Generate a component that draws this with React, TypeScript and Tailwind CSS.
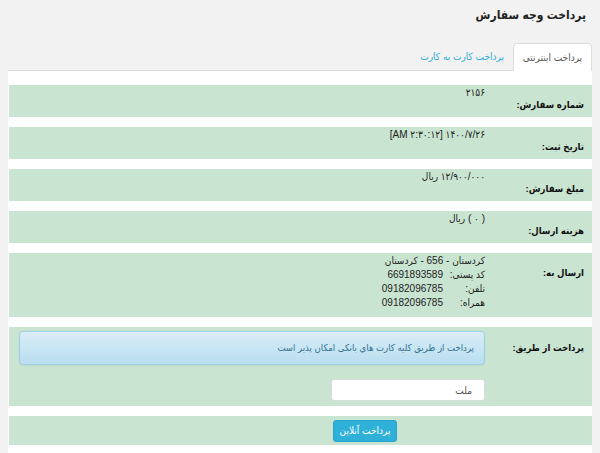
import React from "react";

const font = "font-['Liberation_Sans','DejaVu_Sans_Condensed','DejaVu_Sans',sans-serif]";

function Row({ label, h, children }: { label?: string; h: string; children: React.ReactNode }) {
  return (
    <div className={`flex bg-[#c9e4d1] ${h}`}>
      <div className="w-[107px] shrink-0 pr-[8px] pt-[13px] text-[9.5px] leading-[14px] font-bold text-[#111]">
        {label}
      </div>
      <div className="flex-1 min-w-0 pt-[1px] text-[10px] leading-[14px] text-[#222]">{children}</div>
    </div>
  );
}

export default function App() {
  return (
    <div dir="rtl" className={`w-[600px] h-[453px] overflow-hidden bg-[#f2f2f2] ${font}`}>
      <div className="h-[30px] flex items-center pr-[14px] text-[12px] font-bold text-[#222]">
        پرداخت وجه سفارش
      </div>
      <div className="px-[8px]">
        <div className="mt-[13px] h-[28px] flex border-b border-[#dddddd]">
          <div className="w-[79px] h-[28px] bg-white border border-[#dddddd] border-b-0 rounded-t-[4px] flex items-center justify-center text-[10px] text-[#555]">
            پرداخت اینترنتی
          </div>
          <div className="h-[27px] px-[9px] flex items-center text-[10px] text-[#2aa9d6]">
            پرداخت کارت به کارت
          </div>
        </div>
        <div className="bg-white h-[400px] pt-[14px] pl-[1px] flex flex-col gap-[10px]">
          <Row label="شماره سفارش:" h="h-[32px]">۲۱۵۶</Row>
          <Row label="تاریخ ثبت:" h="h-[32px]">
            <span dir="ltr" className="inline-block">[AM ۲:۳۰:۱۲] ۱۴۰۰/۷/۲۶</span>
          </Row>
          <Row label="مبلغ سفارش:" h="h-[32px]">۱۲/۹۰۰/۰۰۰ ریال</Row>
          <Row label="هزینه ارسال:" h="h-[32px]">( ۰ ) ریال</Row>
          <Row label="ارسال به:" h="h-[64px]">
            <div>کردستان - 656 - کردستان</div>
            <div className="flex">
              <span className="w-[42px] shrink-0">کد پستی:</span>
              <span dir="ltr">6691893589</span>
            </div>
            <div className="flex">
              <span className="w-[42px] shrink-0">تلفن:</span>
              <span dir="ltr">09182096785</span>
            </div>
            <div className="flex">
              <span className="w-[42px] shrink-0">همراه:</span>
              <span dir="ltr">09182096785</span>
            </div>
          </Row>
          <div className="flex bg-[#c9e4d1] h-[79px]">
            <div className="w-[107px] shrink-0 pr-[8px] pt-[14px] text-[9.5px] leading-[14px] font-bold text-[#111]">
              پرداخت از طریق:
            </div>
            <div className="flex-1 pl-[10px] pt-[4px] flex flex-col">
              <div className="h-[34px] rounded-[4px] border border-[#9acfea] bg-[linear-gradient(to_bottom,#d9edf7,#b9def0)] shadow-[inset_0_1px_0_rgba(255,255,255,0.25),0_1px_2px_rgba(0,0,0,0.05)] flex items-center pr-[10px] text-[9.5px] text-[#31708f]">
                پرداخت از طریق کلیه کارت های بانکی امکان پذیر است
              </div>
              <div className="mt-[14px] w-[154px] h-[22px] bg-white border border-[#dcdcdc] rounded-[3px] flex items-center pr-[12px] text-[10px] text-[#555]">
                ملت
              </div>
            </div>
          </div>
          <div className="flex bg-[#c9e4d1] h-[29px] items-center">
            <div className="w-[107px] shrink-0" />
            <div className="mr-[88px] w-[64px] h-[22px] rounded-[3px] bg-[#2fb0d9] border border-[#28a3cc] flex items-center justify-center text-[10px] text-white">
              پرداخت آنلاین
            </div>
          </div>
        </div>
      </div>
    </div>
  );
}
